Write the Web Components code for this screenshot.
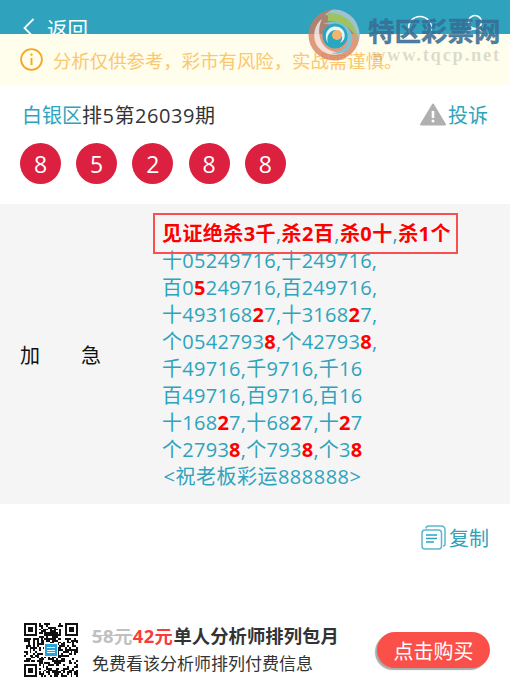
<!DOCTYPE html>
<html lang="zh-CN">
<head>
<meta charset="utf-8">
<title>白银区排5第26039期</title>
<style>
html, body { margin: 0; padding: 0; background: #fff; }
body {
  width: 510px;
  height: 689px;
  overflow: hidden;
  position: relative;
  font-family: "Open Sans", "Noto Sans CJK SC", sans-serif;
  font-size: 20px;
  color: #333;
}
</style>
</head>
<body>
<app-header>返回</app-header>
<notice-bar>分析仅供参考，彩市有风险，实战需谨慎。</notice-bar>
<issue-head area="白银区">排5第26039期</issue-head>
<ball-row>
  <lottery-ball>8</lottery-ball>
  <lottery-ball>5</lottery-ball>
  <lottery-ball>2</lottery-ball>
  <lottery-ball>8</lottery-ball>
  <lottery-ball>8</lottery-ball>
</ball-row>
<forecast-row>
  <kill-box>见证绝杀3千<sep-mark>,</sep-mark>杀2百<sep-mark>,</sep-mark>杀0十<sep-mark>,</sep-mark>杀1个</kill-box>
  <forecast-line>十05249716,十249716,</forecast-line>
  <forecast-line>百0<hot-num>5</hot-num>249716,百249716,</forecast-line>
  <forecast-line>十493168<hot-num>2</hot-num>7,十3168<hot-num>2</hot-num>7,</forecast-line>
  <forecast-line>个0542793<hot-num>8</hot-num>,个42793<hot-num>8</hot-num>,</forecast-line>
  <forecast-line>千49716,千9716,千16</forecast-line>
  <forecast-line>百49716,百9716,百16</forecast-line>
  <forecast-line>十168<hot-num>2</hot-num>7,十68<hot-num>2</hot-num>7,十<hot-num>2</hot-num>7</forecast-line>
  <forecast-line>个2793<hot-num>8</hot-num>,个793<hot-num>8</hot-num>,个3<hot-num>8</hot-num></forecast-line>
  <forecast-line wish>&lt;祝老板彩运888888&gt;</forecast-line>
</forecast-row>
<copy-bar>复制</copy-bar>
<buy-footer></buy-footer>
<site-watermark></site-watermark>

<script>
function defineSimple(name, html) {
  customElements.define(name, class extends HTMLElement {
    constructor() {
      super();
      this.attachShadow({ mode: "open" });
      this.shadowRoot.innerHTML = html.trim();
    }
  });
}

defineSimple("app-header", `
<style>
:host { display: block; height: 34px; overflow: hidden; background: #2fa3bd; color: #fff; }
.bar { display: flex; align-items: center; height: 56px; padding-left: 23px; }
svg { width: 12px; height: 20px; margin-right: 12px; flex: none; }
.title { font-size: 20.5px; }
.tools { margin-left: auto; display: flex; gap: 27px; padding-right: 21px; margin-top: -1px; }
.tools svg { width: 28px; height: 28px; margin: 0; }
</style>
<div class="bar">
  <svg viewBox="0 0 12 20" fill="none" stroke="#fff" stroke-width="1.8"><path d="M10.5 1 1.5 10 10.5 19"/></svg>
  <span class="title"><slot></slot></span>
  <div class="tools">
    <svg viewBox="0 0 28 28" fill="none" stroke="#fff" stroke-width="1.6"><circle cx="14" cy="14" r="11.5"/><path d="M22 22l5 5"/></svg>
    <svg viewBox="0 0 28 28" fill="none" stroke="#fff" stroke-width="1.6"><circle cx="14" cy="8" r="6.5"/><path d="M2 27c0-7 5-12 12-12s12 5 12 12"/></svg>
  </div>
</div>`);

defineSimple("notice-bar", `
<style>
:host { display: flex; align-items: center; height: 51px; padding-left: 20px; background: #fffdeb; color: #fbc76f; font-size: 18.4px; }
svg { width: 23px; height: 23px; margin-right: 10px; flex: none; }
</style>
<svg viewBox="0 0 23 23" fill="none" stroke="#f8a61c" stroke-width="1.8">
  <circle cx="11.5" cy="11.5" r="10.4"/>
  <path d="M11.5 10v7" stroke-width="1.9"/>
  <circle cx="11.5" cy="6.6" r="1.2" fill="#f8a61c" stroke="none"/>
</svg>
<slot></slot>`);

customElements.define("issue-head", class extends HTMLElement {
  constructor() {
    super();
    this.attachShadow({ mode: "open" });
    this.shadowRoot.innerHTML = `
<style>
:host { display: flex; align-items: center; height: 58px; padding: 0 22px; color: #333; }
.area { color: #2fa3bd; }
.issue { letter-spacing: .55px; }
.report { margin-left: auto; display: flex; align-items: center; color: #2fa3bd; }
svg { width: 26px; height: 23px; margin-right: 2px; }
</style>
<span class="area"></span><span class="issue"><slot></slot></span>
<span class="report">
  <svg viewBox="0 0 26 23"><path d="M13 1.5 25 21.5H1Z" fill="#b0b0b0" stroke="#b0b0b0" stroke-width="2" stroke-linejoin="round"/><path d="M13 8v7" stroke="#fff" stroke-width="2.6"/><circle cx="13" cy="18" r="1.5" fill="#fff"/></svg>
  投诉
</span>`;
    this.shadowRoot.querySelector(".area").textContent = this.getAttribute("area");
  }
});

defineSimple("ball-row", `
<style>
:host { display: flex; gap: 15.2px; padding-left: 20px; height: 61px; }
</style>
<slot></slot>`);

defineSimple("lottery-ball", `
<style>
:host { display: flex; align-items: center; justify-content: center; width: 41px; height: 41px; border-radius: 50%; background: #dc203f; color: #fff; font-size: 23px; }
</style>
<slot></slot>`);

defineSimple("forecast-row", `
<style>
:host { display: flex; height: 300px; background: #f5f5f5; color: #2fa3bd; box-sizing: border-box; }
.label { display: flex; align-items: center; gap: 41px; width: 153px; padding-left: 20px; box-sizing: border-box; color: #111; flex: none; }
.body { padding-top: 9px; }
</style>
<div class="label"><span>加</span><span>急</span></div>
<div class="body"><slot></slot></div>`);

defineSimple("kill-box", `
<style>
:host { display: block; box-sizing: border-box; width: 305px; height: 41px; line-height: 38px; margin-bottom: -7px; padding-left: 7px; position: relative; border: 2px solid #f9504f; color: #f00; font-weight: 700; letter-spacing: .42px; white-space: nowrap; }
</style>
<slot></slot>`);

defineSimple("sep-mark", `
<style>
:host { color: #2fa3bd; font-weight: 400; }
</style><slot></slot>`);

defineSimple("forecast-line", `
<style>
:host { display: block; height: 27px; line-height: 27px; padding-left: 9px; white-space: nowrap; letter-spacing: 0.27px; }
:host([wish]) { padding-left: 10.5px; letter-spacing: .5px; }
</style><slot></slot>`);

defineSimple("hot-num", `
<style>
:host { color: #f00; font-weight: 700; }
</style><slot></slot>`);

defineSimple("copy-bar", `
<style>
:host { display: flex; justify-content: flex-end; align-items: center; height: 67px; padding-right: 21px; color: #2fa3bd; }
svg { width: 25px; height: 25px; margin-right: 3px; }
</style>
<svg viewBox="0 0 25 25" fill="none" stroke="#5cb8cd" stroke-width="1.5">
  <path d="M5 3.5Q5 1 7.5 1H20Q24 1 24 5V19Q24 21 22 21"/>
  <rect x="1" y="5" width="19.5" height="19" rx="3"/>
  <path d="M5 10H16M5 13.5H16M5 17H13" stroke="#2fa3bd" stroke-width="1.6"/>
</svg>
<slot></slot>`);

customElements.define("qr-code", class extends HTMLElement {
  constructor() {
    super();
    this.attachShadow({ mode: "open" });
    // made-up module grid, seeded so it stays the same on every load
    let rects = "";
    let seed = 7;
    const n = 29;
    const inFinder = (x, y) => (x < 8 && y < 8) || (x > n - 9 && y < 8) || (x < 8 && y > n - 9);
    for (let y = 0; y < n; y++) {
      for (let x = 0; x < n; x++) {
        seed = (seed * 1103515245 + 12345) & 0x7fffffff;
        if (!inFinder(x, y) && (seed >> 16) % 100 < 52) {
          rects += `<rect x="${x}" y="${y}" width="1" height="1"/>`;
        }
      }
    }
    const finder = (x, y) => `<path d="M${x} ${y}h7v7h-7zM${x + 1} ${y + 1}v5h5v-5z" fill-rule="evenodd"/><rect x="${x + 2}" y="${y + 2}" width="3" height="3"/>`;
    this.shadowRoot.innerHTML = `
<style>
:host { display: block; width: 54px; height: 54px; flex: none; }
svg { display: block; width: 54px; height: 54px; }
</style>
<svg viewBox="0 0 29 29" shape-rendering="crispEdges" fill="#111">
  ${rects}${finder(0, 0)}${finder(22, 0)}${finder(0, 22)}
  <rect x="11" y="11" width="7" height="7" fill="#fff"/>
  <rect x="11.5" y="11.5" width="6" height="6" fill="#25a4dc"/>
  <path d="M12.5 13.2h4M12.5 14.6h4M12.5 16h4" stroke="#fff" stroke-width=".5"/>
</svg>`;
  }
});

defineSimple("buy-footer", `
<style>
:host { display: flex; align-items: center; height: 74px; padding: 0 20px 0 24px; margin-top: 42px; }
.text { margin-left: 14px; }
.title { font-size: 18.3px; line-height: 28px; font-weight: 700; color: #333; letter-spacing: .1px; white-space: nowrap; }
.old { color: #c0c0c0; text-decoration: line-through; letter-spacing: .5px; }
.new { color: #fb3a3a; letter-spacing: .5px; }
.sub { font-size: 17px; line-height: 28px; color: #333; white-space: nowrap; }
button { margin-left: auto; width: 113px; height: 36px; border: 0; border-radius: 18px; padding: 0; background: #fb4f4a; color: #fff; font: inherit; font-size: 20px; box-shadow: -2px 2px 1px #aaa; }
</style>
<qr-code></qr-code>
<div class="text">
  <div class="title"><span class="old">58元</span><span class="new">42元</span>单人分析师排列包月</div>
  <div class="sub">免费看该分析师排列付费信息</div>
</div>
<button>点击购买</button>`);

defineSimple("site-watermark", `
<style>
:host { display: block; position: absolute; left: 308px; top: 9px; width: 200px; height: 56px; pointer-events: none; }
svg { position: absolute; left: 0; top: 0; width: 52px; height: 52px; }
.cn { position: absolute; left: 60px; top: 3px; font: 700 26.5px/36px "Noto Sans CJK SC", sans-serif; color: rgba(55, 110, 150, .9); -webkit-text-stroke: .4px rgba(55, 110, 150, .9); white-space: nowrap; }
.en { position: absolute; left: 64px; top: 36px; font: 700 18.5px/20px "Liberation Serif", serif; letter-spacing: 1.75px; color: rgba(130, 130, 130, .28); white-space: nowrap; }
</style>
<svg viewBox="0 0 52 52">
  <circle cx="26" cy="26" r="25.5" fill="#d4785a" opacity=".75"/>
  <path d="M26 .5A25.5 25.5 0 0 1 51 31C47 16 36 7 17 6 20 3 23 .5 26 .5Z" fill="#9cc6d6" opacity=".95"/>
  <path d="M20 4C36 3 49 15 49 30 43 18 34 12 20 12Z" fill="#9dc45f"/>
  <path d="M14 10C6 16 3 30 11 39 17 46 29 48 37 43 27 45 17 41 13 32 10 24 11 16 14 10Z" fill="#fff" opacity=".7"/>
  <path d="M15 15C30 8 47 18 44 33 42 42 32 47 23 44 33 44 40 38 40 30 40 21 29 15 15 15Z" fill="#7cc3d6"/>
  <circle cx="27" cy="27" r="12.5" fill="#27a7c0"/>
  <path d="M20 34C14 24 22 15 31 18 38 21 39 31 32 34 37 28 33 21 27 21 21 22 18 28 20 34Z" fill="#fff" opacity=".9"/>
  <circle cx="29" cy="26" r="5" fill="#f5b46b"/>
</svg>
<span class="cn">特区彩票网</span>
<span class="en">www.tqcp.net</span>`);
</script>
</body>
</html>
